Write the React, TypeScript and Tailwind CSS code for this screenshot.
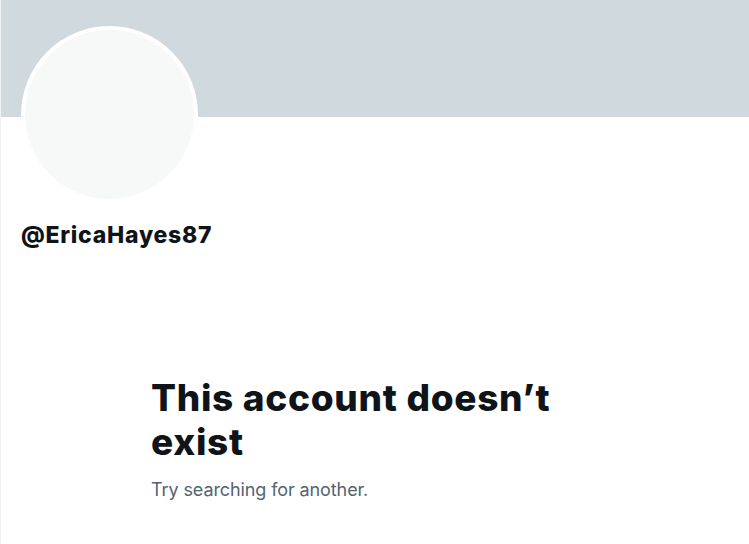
export default function App() {
  return (
    <div className="w-[749px] h-[544px] bg-white border-l border-[#eff3f4] overflow-hidden" style={{ fontFamily: 'Inter, "Liberation Sans", sans-serif' }}>
      <div className="h-[117px] bg-[#cfd9de]" />
      <div className="pl-[20px]">
        <div className="-mt-[91px] w-[177px] h-[177px] rounded-full bg-[#f7f9f9] border-[4px] border-white" />
        <div className="mt-[18px] text-[23px] leading-[28px] font-extrabold text-[#0f1419] tracking-[0.75px]">@EricaHayes87</div>
      </div>
      <div className="pl-[150px] mt-[127px]">
        <div className="w-[420px] text-[37px] leading-[44px] font-extrabold text-[#0f1419] tracking-[0.7px]">
          This account doesn’t exist
        </div>
        <div className="mt-[14px] text-[18px] leading-[24px] text-[#536471] tracking-[-0.1px]">Try searching for another.</div>
      </div>
    </div>
  );
}
